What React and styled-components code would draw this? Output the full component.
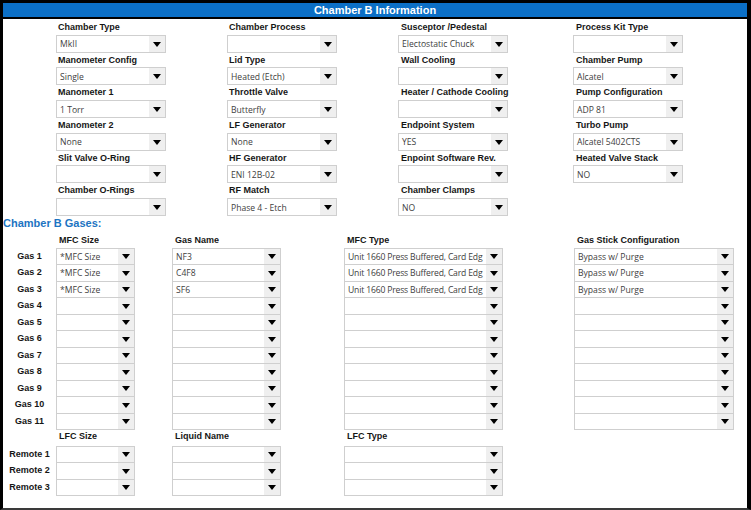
import React from 'react';
import styled, { createGlobalStyle } from 'styled-components';

const GlobalStyle = createGlobalStyle`
  html, body {
    margin: 0;
    padding: 0;
    background: #fff;
  }
`;

const Frame = styled.div`
  box-sizing: border-box;
  width: 751px;
  height: 510px;
  overflow: hidden;
  border-top: 3px solid #000;
  border-left: 3px solid #000;
  border-right: 4px solid #000;
  border-bottom: 2px solid #3a3a3a;
  background: #fff;
  font-family: 'Liberation Sans', Arial, sans-serif;
`;

const Header = styled.div`
  height: 14px;
  line-height: 14px;
  background: #0b6fc6;
  border-bottom: 2px solid #000;
  margin-bottom: 1px;
  color: #fff;
  font-weight: bold;
  font-size: 11px;
  text-align: center;
`;

const TopGrid = styled.div`
  display: grid;
  grid-template-columns: 171px 171px 175px 1fr;
  padding-left: 53px;
`;

const Field = styled.div`
  display: flex;
  flex-direction: column;
`;

const Label = styled.div`
  height: 14.7px;
  line-height: 14px;
  padding-left: ${({ $indent }) => $indent || 2}px;
  font-size: 9px;
  font-weight: bold;
  color: #161616;
  white-space: nowrap;
`;

const Box = styled.div`
  box-sizing: border-box;
  position: relative;
  width: ${({ $w }) => $w}px;
  height: ${({ $h }) => $h}px;
  border: 1px solid #cfcfcf;
  background: #fff;
  display: flex;
  align-items: center;
`;

const Value = styled.span`
  flex: 1;
  overflow: hidden;
  white-space: nowrap;
  padding-left: 3px;
  padding-top: 1px;
  font-family: 'Open Sans', 'Noto Sans', sans-serif;
  font-size: 8.6px;
  letter-spacing: ${({ $tight }) => ($tight ? '-0.17px' : 'normal')};
  color: #404040;
`;

const Arrow = styled.span`
  flex: none;
  width: 16px;
  align-self: stretch;
  background: #efefef;
  display: flex;
  align-items: center;
  justify-content: center;
  &::after {
    content: '';
    border-left: 4px solid transparent;
    border-right: 4px solid transparent;
    border-top: 5px solid #000;
    margin-top: 1px;
  }
`;

const Select = ({ value, w = 110, h = 18, tight }) => (
  <Box $w={w} $h={h}>
    <Value $tight={tight}>{value}</Value>
    <Arrow />
  </Box>
);

const SectionTitle = styled.div`
  height: 15px;
  line-height: 15px;
  color: #1c74c2;
  font-size: 11px;
  font-weight: bold;
`;

const GasGrid = styled.div`
  display: grid;
  grid-template-columns: 53px 116px 172px 230px 1fr;
  grid-auto-rows: 16.5px;
`;

const HeadCell = styled.div`
  height: ${({ $h }) => $h}px;
  line-height: ${({ $h }) => $h}px;
  padding-left: 3px;
  font-size: 9px;
  font-weight: bold;
  color: #161616;
  white-space: nowrap;
`;

const HeadRow = styled.div`
  grid-column: 1 / -1;
  display: grid;
  grid-template-columns: 53px 116px 172px 230px 1fr;
`;

const RowLabel = styled.div`
  text-align: center;
  line-height: 17px;
  font-size: 9px;
  font-weight: bold;
  color: #161616;
  white-space: nowrap;
`;

const Cell = styled.div`
  height: 16.5px;
`;

const top = [
  [['Chamber Type', 'MkII'], ['Chamber Process', ''], ['Susceptor /Pedestal', 'Electostatic Chuck'], ['Process Kit Type', '']],
  [['Manometer Config', 'Single'], ['Lid Type', 'Heated (Etch)'], ['Wall Cooling', ''], ['Chamber Pump', 'Alcatel']],
  [['Manometer 1', '1 Torr'], ['Throttle Valve', 'Butterfly'], ['Heater / Cathode Cooling', ''], ['Pump Configuration', 'ADP 81']],
  [['Manometer 2', 'None'], ['LF Generator', 'None'], ['Endpoint System', 'YES'], ['Turbo Pump', 'Alcatel 5402CTS']],
  [['Slit Valve O-Ring', ''], ['HF Generator', 'ENI 12B-02'], ['Enpoint Software Rev.', ''], ['Heated Valve Stack', 'NO']],
  [['Chamber O-Rings', ''], ['RF Match', 'Phase 4 - Etch'], ['Chamber Clamps', 'NO'], null],
];

const gases = Array.from({ length: 11 }, (_, i) => {
  const filled = i < 3;
  return {
    name: `Gas ${i + 1}`,
    size: filled ? '*MFC Size' : '',
    gas: filled ? ['NF3', 'C4F8', 'SF6'][i] : '',
    type: filled ? 'Unit 1660 Press Buffered, Card Edg' : '',
    stick: filled ? 'Bypass w/ Purge' : '',
  };
});

const remotes = ['Remote 1', 'Remote 2', 'Remote 3'];

export default function App() {
  return (
    <>
      <GlobalStyle />
      <Frame>
        <Header>Chamber B Information</Header>
        <TopGrid>
          {top.flat().map((f, i) =>
            f ? (
              <Field key={i}>
                <Label $indent={i % 4 >= 2 ? 3 : 2}>{f[0]}</Label>
                <Select value={f[1]} />
              </Field>
            ) : (
              <div key={i} />
            )
          )}
        </TopGrid>
        <SectionTitle>Chamber B Gases:</SectionTitle>
        <GasGrid>
          <HeadRow>
            <div />
            <HeadCell $h={18}>MFC Size</HeadCell>
            <HeadCell $h={18}>Gas Name</HeadCell>
            <HeadCell $h={18}>MFC Type</HeadCell>
            <HeadCell $h={18}>Gas Stick Configuration</HeadCell>
          </HeadRow>
          {gases.map((g) => (
            <React.Fragment key={g.name}>
              <RowLabel>{g.name}</RowLabel>
              <Cell><Select w={79} h={17.5} value={g.size} /></Cell>
              <Cell><Select w={109} h={17.5} value={g.gas} /></Cell>
              <Cell><Select w={159} h={17.5} value={g.type} tight /></Cell>
              <Cell><Select w={160} h={17.5} value={g.stick} /></Cell>
            </React.Fragment>
          ))}
          <HeadRow>
            <div />
            <HeadCell $h={15}>LFC Size</HeadCell>
            <HeadCell $h={15}>Liquid Name</HeadCell>
            <HeadCell $h={15}>LFC Type</HeadCell>
            <div />
          </HeadRow>
          {remotes.map((r) => (
            <React.Fragment key={r}>
              <RowLabel>{r}</RowLabel>
              <Cell><Select w={79} h={17.5} /></Cell>
              <Cell><Select w={109} h={17.5} /></Cell>
              <Cell><Select w={159} h={17.5} /></Cell>
              <div />
            </React.Fragment>
          ))}
        </GasGrid>
      </Frame>
    </>
  );
}
